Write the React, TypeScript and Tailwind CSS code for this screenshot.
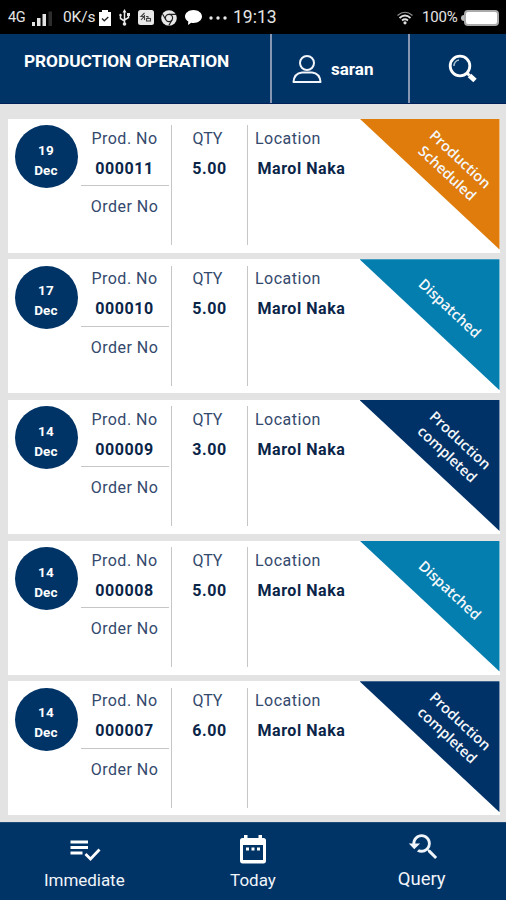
import { MdYoutubeSearchedFor } from "react-icons/md";

type Status = "scheduled" | "dispatched" | "completed";

type Production = {
  day: string;
  month: string;
  prodNo: string;
  qty: string;
  location: string;
  status: Status;
};

const PRODUCTIONS: Production[] = [
  { day: "19", month: "Dec", prodNo: "000011", qty: "5.00", location: "Marol Naka", status: "scheduled" },
  { day: "17", month: "Dec", prodNo: "000010", qty: "5.00", location: "Marol Naka", status: "dispatched" },
  { day: "14", month: "Dec", prodNo: "000009", qty: "3.00", location: "Marol Naka", status: "completed" },
  { day: "14", month: "Dec", prodNo: "000008", qty: "5.00", location: "Marol Naka", status: "dispatched" },
  { day: "14", month: "Dec", prodNo: "000007", qty: "6.00", location: "Marol Naka", status: "completed" },
];

const RIBBONS: Record<Status, { color: string; text: string; label: string }> = {
  scheduled: { color: "bg-[#df7c0b]", text: "left-[94px] top-[47px]", label: "Production\nScheduled" },
  dispatched: { color: "bg-[#047eae]", text: "left-[90px] top-[49px]", label: "Dispatched" },
  completed: { color: "bg-[#003268]", text: "left-[94px] top-[47px]", label: "Production\ncompleted" },
};

function StatusBar() {
  return (
    <div className="flex h-[34px] items-center bg-black pl-2 pr-[7px] pt-px text-[15px] text-[#e4e4e4]">
      <span className="w-[24px] text-[14.5px] tracking-[-0.3px]">4G</span>
      <svg className="h-4 w-5" viewBox="0 0 20 16" fill="#e4e4e4">
        <path d="M0 12h3v4H0zM5 8h3.500v8H5zM10.500 4H14v12h-3.500z" />
        <path d="M16.500 1.500H20V16h-3.500z" fill="#2d2d2d" />
      </svg>
      <span className="ml-[11px] w-[34px] whitespace-nowrap text-[15.5px] tracking-[-0.1px]">0K/s</span>
      <svg className="ml-[2px] h-4 w-3" viewBox="0 0 12 16">
        <path d="M0 2h3V0h6v2h3v14H0z" fill="#fff" />
        <path d="M3 8.500l2.300 2.300L9.300 7" fill="none" stroke="#222" strokeWidth="1.300" />
      </svg>
      <svg className="ml-[8px] h-[17px] w-[11px]" viewBox="0 0 11 17" fill="none" stroke="#e8e8e8" strokeWidth="1.500">
        <path d="M5.500 2v13M1.500 6v3.500l4 2.500M9.500 5v3.500l-4 2.500" />
        <path d="M5.500 0l2 3.500h-4z" fill="#e8e8e8" stroke="none" />
        <circle cx="5.500" cy="15" r="1.800" fill="#e8e8e8" stroke="none" />
        <circle cx="1.500" cy="6" r="1.200" fill="#e8e8e8" stroke="none" />
        <path d="M8 4h3v3H8z" fill="#e8e8e8" stroke="none" />
      </svg>
      <svg className="ml-[8px] h-[15px] w-4" viewBox="0 0 16 15">
        <rect width="16" height="15" rx="2.500" fill="#e8e8e8" />
        <g fill="none" stroke="#444" strokeWidth="1.100">
          <path d="M6.500 3L3 6.500h3L3 10M6.500 5v5M8 6.500h2v1.500" />
          <rect x="8.500" y="8.500" width="4" height="2.500" />
        </g>
      </svg>
      <svg className="ml-[7px] h-4 w-4" viewBox="0 0 16 16">
        <circle cx="8" cy="8" r="7.800" fill="#e8e8e8" />
        <circle cx="8" cy="8" r="3.600" fill="none" stroke="#222" strokeWidth="1.200" />
        <path d="M8 4.400h7M4.900 9.800L1.500 4M11.100 9.800L7.800 15.500" stroke="#222" strokeWidth="1.200" />
      </svg>
      <svg className="ml-[8px] h-[15px] w-[17px]" viewBox="0 0 17 15" fill="#fff">
        <path d="M8.500 0C13.200 0 17 2.900 17 6.500S13.200 13 8.500 13c-.8 0-1.600-.1-2.300-.3L3 15l.3-3.600C1.300 10.200 0 8.500 0 6.500 0 2.900 3.800 0 8.500 0z" />
      </svg>
      <svg className="ml-[7px] h-1 w-[18px]" viewBox="0 0 18 4" fill="#e8e8e8">
        <circle cx="2" cy="2" r="1.700" />
        <circle cx="9" cy="2" r="1.700" />
        <circle cx="16" cy="2" r="1.700" />
      </svg>
      <span className="ml-[6px] text-[17.5px]">19:13</span>
      <svg className="ml-auto h-[14px] w-4" viewBox="0 0 16 14" fill="none" stroke="#e0e0e0">
        <path d="M.500 4.500Q8-2 15.500 4.500" strokeWidth="1.200" opacity=".65" />
        <path d="M2.500 7Q8 2 13.500 7" strokeWidth="1.900" />
        <path d="M5 9.500Q8 7 11 9.500" strokeWidth="1.700" />
        <circle cx="8" cy="11.800" r="1.600" fill="#e0e0e0" stroke="none" />
      </svg>
      <span className="ml-[9px] w-[37px] text-[15px] tracking-[-0.2px]">100%</span>
      <div className="ml-[2px] h-[6px] w-[3px] rounded-l bg-[#bbb]" />
      <div className="h-4 w-[35px] rounded-[4px] border-2 border-[#aaa] bg-white" />
    </div>
  );
}

function Header() {
  return (
    <header className="flex h-[70px] border-b border-[#00205c] bg-[#003366] text-white">
      <h1 className="w-[270px] pl-6 pt-[14px] text-[17.3px] font-bold leading-[26px] tracking-[-0.05px]">
        PRODUCTION OPERATION
      </h1>
      <div className="flex w-[140px] items-center border-x-2 border-[#8796b2] pl-5">
        <svg className="h-[30px] w-[30px]" viewBox="0 0 30 30" fill="none" stroke="#f2f6fb" strokeWidth="2">
          <circle cx="15" cy="9" r="7" />
          <path d="M1.500 28C2 22 5 19 10 18.500h10c5 .500 8 3.500 8.500 9.500z" strokeLinejoin="round" />
        </svg>
        <span className="ml-[9px] text-[17px] font-bold leading-5">saran</span>
      </div>
      <div className="flex flex-1 items-center justify-center pl-[10px]">
        <svg className="h-[30px] w-[30px]" viewBox="0 0 30 30" fill="none" stroke="#fff">
          <circle cx="12" cy="12" r="9.800" strokeWidth="2.800" />
          <path d="M6 12a6 6 0 0 1 5-6" stroke="#a9c3ce" strokeWidth="1.500" />
          <path d="M18.500 18.500l3 3" strokeWidth="3" />
          <path d="M21.500 21.500l5.500 5" strokeWidth="5" />
        </svg>
      </div>
    </header>
  );
}

function Ribbon({ status }: { status: Status }) {
  const { color, text, label } = RIBBONS[status];
  return (
    <div
      className={`absolute right-0 top-0 h-[131px] w-[140px] [clip-path:polygon(0_0,100%_0,100%_100%)] ${color}`}
    >
      <p
        className={`absolute -translate-x-1/2 -translate-y-1/2 rotate-[43deg] whitespace-pre text-center font-['Open_Sans',sans-serif] text-[14.5px] font-semibold leading-[19px] text-[#f4f7fa] ${text}`}
      >
        {label}
      </p>
    </div>
  );
}

function ProductionCard({ item }: { item: Production }) {
  return (
    <article className="relative flex h-[134px] bg-white pl-[7px] pt-[6.500px] text-[16px] leading-5 text-[#33496d]">
      <div className="flex h-[63px] w-[63px] flex-col items-center rounded-full bg-[#003366] pt-[14.500px] text-[13.5px] font-bold leading-5 tracking-[0.2px] text-white">
        <span>{item.day}</span>
        <span>{item.month}</span>
      </div>
      <div className="ml-[3px] w-[88px] text-center">
        <div className="pt-[3.500px] tracking-[0.5px]">Prod. No</div>
        <div className="mt-[10px] font-bold tracking-[0.6px] text-[#0a2548]">{item.prodNo}</div>
        <div className="mt-[6.500px] border-t border-[#c6c6c6] pt-[11px] tracking-[0.5px]">Order No</div>
      </div>
      <div className="ml-[2px] h-[120px] w-[77px] border-x border-[#c6c6c6] text-center">
        <div className="pr-[3px] pt-[3.500px]">QTY</div>
        <div className="mt-[10px] pl-px font-bold tracking-[0.6px] text-[#0a2548]">{item.qty}</div>
      </div>
      <div className="pl-[7.500px]">
        <div className="pt-[3.500px] tracking-[0.5px]">Location</div>
        <div className="ml-[2.500px] mt-[10px] font-bold tracking-[0.55px] text-[#0a2548]">{item.location}</div>
      </div>
      <Ribbon status={item.status} />
    </article>
  );
}

function BottomNav() {
  return (
    <nav className="grid h-[78px] grid-cols-3 border-t border-[#1f4a78] bg-[#003366] text-center text-[17px] leading-5 text-[#f0f5fa]">
      <div className="flex flex-col items-center pt-[10px]">
        <svg className="ml-[2px] h-[34px] w-[34px]" viewBox="0 0 34 34">
          <path d="M2.500 7.500H20v3H2.500zM2.500 13H20v3H2.500zM2.500 18.500H14.500v3H2.500z" fill="#fff" />
          <path d="M17.500 21l5 5 9-9.500" fill="none" stroke="#fff" strokeWidth="2.800" />
        </svg>
        <span className="mt-[3px] tracking-[-0.05px]">Immediate</span>
      </div>
      <div className="flex flex-col items-center pt-[10px]">
        <svg className="ml-px h-[34px] w-[28px]" viewBox="0 0 28 34">
          <path d="M5 2h3.500v3h11V2H23v3h1.500Q27 5 27 7.500v20Q27 30.500 24.500 30.500h-21Q1 30.500 1 27.500v-20Q1 5 3.500 5H5zM4 12v15h20V12z" fill="#fff" fillRule="evenodd" />
          <path d="M7 14.500h3v3H7zM12.500 14.500h3v3h-3zM18 14.500h3v3h-3z" fill="#fff" />
        </svg>
        <span className="mt-[3px]">Today</span>
      </div>
      <div className="flex flex-col items-center pt-[7px] text-[18.5px]">
        <MdYoutubeSearchedFor className="ml-[2px] h-[34px] w-[34px]" />
        <span className="mt-[5px]">Query</span>
      </div>
    </nav>
  );
}

export default function App() {
  return (
    <div className="flex h-[900px] w-[506px] flex-col overflow-hidden bg-[#e3e3e3] font-[Roboto,sans-serif]">
      <StatusBar />
      <Header />
      <main className="flex flex-1 flex-col gap-[6.7px] pl-[7.5px] pr-[6.5px] pt-[14.5px]">
        {PRODUCTIONS.map((item) => (
          <ProductionCard key={item.prodNo} item={item} />
        ))}
      </main>
      <BottomNav />
    </div>
  );
}
